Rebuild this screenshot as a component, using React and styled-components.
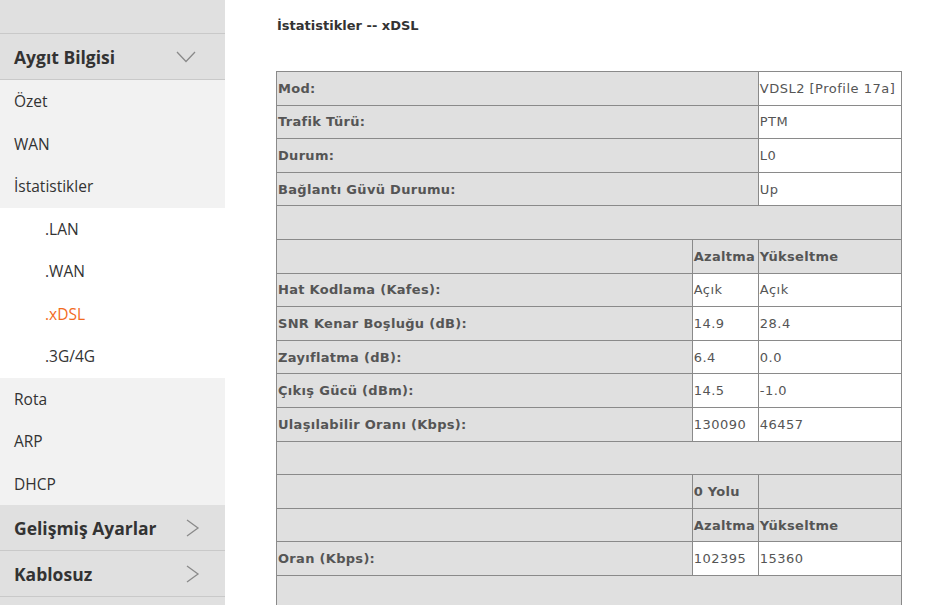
import React from 'react';
import styled, { createGlobalStyle } from 'styled-components';

const GlobalStyle = createGlobalStyle`
  html, body {
    margin: 0;
    padding: 0;
    background: #ffffff;
  }
  #root {
    min-height: 605px;
  }
`

const Page = styled.div`
  display: flex;
  height: 605px;
  overflow: hidden;
`

const Sidebar = styled.nav`
  width: 225px;
  flex-shrink: 0;
  background-color: #e0e0e0;
  font-family: "Open Sans", "Noto Sans", sans-serif;
  color: #333333;
  overflow: hidden;
`

const TopStub = styled.div`
  height: 33px;
  border-bottom: 1px solid #c9c9c9;
`

const GroupHeader = styled.div`
  height: 45px;
  display: flex;
  align-items: center;
  justify-content: space-between;
  padding: 0 25px 0 14px;
  border-bottom: 1px solid #c9c9c9;
  font-size: 17.5px;
  font-weight: 700;
  color: #333333;
`

const ItemList = styled.div`
  background-color: ${(props) => props.white ? '#ffffff' : '#f2f2f2'};
`

const Item = styled.div`
  height: 42.5px;
  display: flex;
  align-items: center;
  padding-left: ${(props) => props.nested ? '45px' : '14px'};
  font-size: 15.5px;
  color: ${(props) => props.active ? '#f26b1d' : '#333333'};
`

const Icon = styled.svg`
  margin-right: ${(props) => props.shift || 0}px;
`

const Chevron = ({ dir }) => (
  dir === 'down' ? (
    <Icon shift={4} width="20" height="12" viewBox="0 0 20 12">
      <polyline points="1,1 10,10.5 19,1" fill="none" stroke="#8a8a8a" strokeWidth="1.3" />
    </Icon>
  ) : (
    <Icon width="14" height="18" viewBox="0 0 14 18">
      <polyline points="1,1 12,9 1,17" fill="none" stroke="#8a8a8a" strokeWidth="1.3" />
    </Icon>
  )
)

const Main = styled.main`
  flex: 1;
  padding: 18px 0 0 51px;
  font-family: "DejaVu Sans", Verdana, sans-serif;
`

const Title = styled.h4`
  margin: 0 0 37px 1px;
  font-size: 13px;
  line-height: 16px;
  font-weight: 700;
  color: #333333;
`

const Table = styled.table`
  width: 626px;
  border-collapse: collapse;
  background-color: #e0e0e0;
  font-size: 13px;
  color: #555555;
`

const Row = styled.tr`
  height: 33.6px;
`

const Cell = styled.td`
  border: 1px solid #8a8a8a;
  padding: 0 0 0 1px;
  white-space: nowrap;
  font-weight: ${(props) => props.bold ? 700 : 400};
  letter-spacing: ${(props) => props.value ? '0.5px' : '0.3px'};
  background-color: ${(props) => props.value ? '#ffffff' : 'transparent'};
`

const topRows = [
  ['Mod:', 'VDSL2 [Profile 17a]'],
  ['Trafik Türü:', 'PTM'],
  ['Durum:', 'L0'],
  ['Bağlantı Güvü Durumu:', 'Up'],
]

const lineRows = [
  ['Hat Kodlama (Kafes):', 'Açık', 'Açık'],
  ['SNR Kenar Boşluğu (dB):', '14.9', '28.4'],
  ['Zayıflatma (dB):', '6.4', '0.0'],
  ['Çıkış Gücü (dBm):', '14.5', '-1.0'],
  ['Ulaşılabilir Oranı (Kbps):', '130090', '46457'],
]

const App = () => {
  return (
    <>
      <GlobalStyle />
      <Page>
        <Sidebar>
          <TopStub />
          <GroupHeader>Aygıt Bilgisi <Chevron dir="down" /></GroupHeader>
          <ItemList>
            <Item>Özet</Item>
            <Item>WAN</Item>
            <Item>İstatistikler</Item>
          </ItemList>
          <ItemList white>
            <Item nested>.LAN</Item>
            <Item nested>.WAN</Item>
            <Item nested active>.xDSL</Item>
            <Item nested>.3G/4G</Item>
          </ItemList>
          <ItemList>
            <Item>Rota</Item>
            <Item>ARP</Item>
            <Item>DHCP</Item>
          </ItemList>
          <GroupHeader>Gelişmiş Ayarlar <Chevron dir="right" /></GroupHeader>
          <GroupHeader>Kablosuz <Chevron dir="right" /></GroupHeader>
          <GroupHeader />
        </Sidebar>

        <Main>
          <Title>İstatistikler -- xDSL</Title>
          <Table>
            <colgroup>
              <col style={{ width: '415px' }} />
              <col style={{ width: '66px' }} />
              <col style={{ width: '143px' }} />
            </colgroup>
            <tbody>
              {topRows.map(([label, val]) => (
                <Row key={label}>
                  <Cell bold colSpan={2}>{label}</Cell>
                  <Cell value>{val}</Cell>
                </Row>
              ))}
              <Row><Cell colSpan={3} /></Row>
              <Row>
                <Cell />
                <Cell bold>Azaltma</Cell>
                <Cell bold>Yükseltme</Cell>
              </Row>
              {lineRows.map(([label, down, up]) => (
                <Row key={label}>
                  <Cell bold>{label}</Cell>
                  <Cell value>{down}</Cell>
                  <Cell value>{up}</Cell>
                </Row>
              ))}
              <Row><Cell colSpan={3} /></Row>
              <Row>
                <Cell />
                <Cell bold>0 Yolu</Cell>
                <Cell />
              </Row>
              <Row>
                <Cell />
                <Cell bold>Azaltma</Cell>
                <Cell bold>Yükseltme</Cell>
              </Row>
              <Row>
                <Cell bold>Oran (Kbps):</Cell>
                <Cell value>102395</Cell>
                <Cell value>15360</Cell>
              </Row>
              <Row><Cell colSpan={3} /></Row>
            </tbody>
          </Table>
        </Main>
      </Page>
    </>
  )
}

export default App;
